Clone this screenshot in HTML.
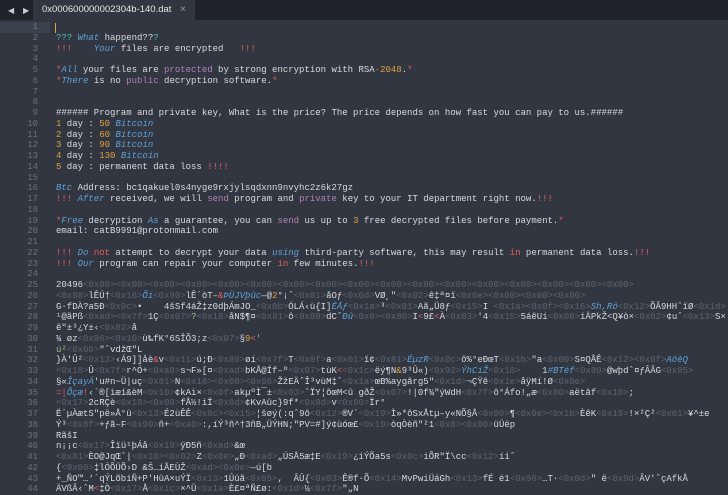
<!DOCTYPE html>
<html><head><meta charset="utf-8"><style>
body{margin:0;width:728px;height:490px;overflow:hidden;background:#313640;font-family:"Liberation Mono",monospace;}
#tabs{position:absolute;left:0;top:0;width:728px;height:20px;background:#1f2228;}
#tab{position:absolute;left:33px;top:0;width:162px;height:20px;background:#313640;color:#e6e6e6;font:9.5px "Liberation Sans",sans-serif;line-height:20px;padding-left:9px;box-sizing:border-box}
#tab span{position:absolute;left:147px;color:#999;font-size:10px}
#arr{position:absolute;left:8px;top:6px;color:#ccc;font-size:8px;letter-spacing:2px}
#gut{position:absolute;left:0;top:22px;width:38px;text-align:right;color:#6b717d;font-size:9px;line-height:10.75px}
#hl{position:absolute;left:0;top:22px;width:50px;height:10.75px;background:#3c424d}
#ed{position:absolute;left:56px;top:22px;color:#d8dbe0;font-size:9px;line-height:10.75px;white-space:pre}
#cur{position:absolute;left:55px;top:23px;width:1px;height:10px;background:#e5a444}
.g{color:#5d6470}.b{color:#5fa0d8;font-style:italic}.o{color:#e0a040}.r{color:#e0605a}.p{color:#b381b8}.gr{color:#98c379}.c{color:#4fb8c0}
</style></head><body>
<div id="tabs"><div id="arr">◀ ▶</div><div id="tab">0x000600000002304b-140.dat<span>×</span></div></div>
<div id="hl"></div>
<div id="gut">1<br>2<br>3<br>4<br>5<br>6<br>7<br>8<br>9<br>10<br>11<br>12<br>13<br>14<br>15<br>16<br>17<br>18<br>19<br>20<br>21<br>22<br>23<br>24<br>25<br>26<br>27<br>28<br>29<br>30<br>31<br>32<br>33<br>34<br>35<br>36<br>37<br>38<br>39<br>40<br>41<br>42<br>43<br>44</div>
<div id="cur"></div>
<div id="ed">
<span class="c">???</span> <span class="b">What</span> happend??<span class="c">?</span>
<span class="r">!!!</span>    <span class="b">Your</span> files are encrypted   <span class="r">!!!</span>

<span class="r">*</span><span class="b">All</span> your files are <span class="p">protected</span> by strong encryption with RSA<span class="r">-</span><span class="o">2048</span>.<span class="r">*</span>
<span class="r">*</span><span class="b">There</span> is no <span class="p">public</span> decryption software.<span class="r">*</span>


###### Program and private key, What is the price? The price depends on how fast you can pay to us.######
<span class="o">1</span> day : <span class="o">50</span> <span class="b">Bitcoin</span>
<span class="o">2</span> day : <span class="o">60</span> <span class="b">Bitcoin</span>
<span class="o">3</span> day : <span class="o">90</span> <span class="b">Bitcoin</span>
<span class="o">4</span> day : <span class="o">130</span> <span class="b">Bitcoin</span>
<span class="o">5</span> day : permanent data loss <span class="r">!!!!</span>

<span class="b">Btc</span> Address: bc1qakuel0s4nyge9rxjylsqdxnn9nvyhc2z6k27gz
<span class="r">!!!</span> <span class="b">After</span> received, we will <span class="p">send</span> program and <span class="p">private</span> key to your IT department right now.<span class="r">!!!</span>

<span class="r">*</span><span class="b">Free</span> decryption <span class="b">As</span> a guarantee, you can <span class="p">send</span> us up to <span class="o">3</span> free decrypted files before payment.<span class="r">*</span>
email: catB9991@protonmail.com

<span class="r">!!!</span> <span class="b">Do</span> <span class="r">not</span> attempt to decrypt your data <span class="b">using</span> third-party software, this may result <span class="r">in</span> permanent data loss.<span class="r">!!!</span>
<span class="r">!!!</span> <span class="b">Our</span> program can repair your computer <span class="r">in</span> few minutes.<span class="r">!!!</span>

20496<span class="g">&lt;0x00&gt;&lt;0x00&gt;&lt;0x00&gt;&lt;0x00&gt;&lt;0x00&gt;&lt;0x00&gt;&lt;0x00&gt;&lt;0x00&gt;&lt;0x00&gt;&lt;0x00&gt;&lt;0x00&gt;&lt;0x00&gt;&lt;0x00&gt;&lt;0x00&gt;&lt;0x00&gt;&lt;0x00&gt;&lt;0x00&gt;</span>
<span class="g">&lt;0x98&gt;</span>lÊÚ†<span class="g">&lt;0x16&gt;</span><span class="b">Õí</span><span class="g">&lt;0x90&gt;</span>lÊ´òT–<span class="r">&amp;</span><span class="b">ÞÜJVþûc</span>—@<span class="o">2</span>°¡ˆ<span class="g">&lt;0x01&gt;</span>åOƒ<span class="g">&lt;0x0d&gt;</span>VØ¸"<span class="g">&lt;0x02&gt;</span>ê‡ª¤ï<span class="g">&lt;0x0e&gt;&lt;0x00&gt;&lt;0x00&gt;&lt;0x00&gt;</span>
G·fDÀ?a5Ð<span class="g">&lt;0x0c&gt;</span>•    4šSf4áŽ‡z0dþÁmJO_<span class="g">&lt;0x0b&gt;</span>ÓLÁ‹ù{I]<span class="b">ÉÅƒ</span><span class="g">&lt;0x1a&gt;</span>³<span class="g">&lt;0x01&gt;</span>Aã„Ü8ƒ<span class="g">&lt;0x15&gt;</span>I <span class="g">&lt;0x1a&gt;&lt;0x0f&gt;&lt;0x16&gt;</span><span class="b">Sh,Rö</span><span class="g">&lt;0x12&gt;</span>ÕÂ9HHˆïØ<span class="g">&lt;0x1d&gt;</span>
¹@ãPß<span class="g">&lt;0xad&gt;&lt;0x7f&gt;</span>1Ç<span class="g">&lt;0x07&gt;</span><span class="gr">?</span><span class="g">&lt;0x18&gt;</span>åN$¶¤<span class="g">&lt;0x81&gt;</span>ô<span class="g">&lt;0x80&gt;</span>dCˆ<span class="b">Ðû</span><span class="g">&lt;0x0&gt;&lt;0x80&gt;</span>I<span class="r">&lt;</span>9£<span class="r">&lt;</span>À<span class="g">&lt;0x03&gt;</span>'4<span class="g">&lt;0x15&gt;</span>5áêUí<span class="g">&lt;0x00&gt;</span>iÄPkŽ&lt;Q¥ò×<span class="g">&lt;0x02&gt;</span>¢uˆ<span class="g">&lt;0x13&gt;</span>S×
ê"±³¿Y±‹<span class="g">&lt;0x02&gt;</span>å
¾ øz<span class="g">&lt;0x06&gt;&lt;0x10&gt;</span>ù‰fK°6SÎÕ3;z<span class="g">&lt;0x07&gt;</span>§<span class="o">9</span><span class="r">&lt;</span><span class="gr">'</span>
<span class="gr">ú²</span><span class="g">&lt;0x00&gt;</span>"ˆvdžŒ"L
}À'Û²<span class="g">&lt;0x13&gt;</span>‹Á9]]åè<span class="r">&amp;</span>v<span class="g">&lt;0x11&gt;</span>ú;Ð<span class="g">&lt;0x80&gt;</span>øí<span class="g">&lt;0x7f&gt;</span>T<span class="g">&lt;0x0f&gt;</span>a<span class="g">&lt;0x01&gt;</span>ï¢<span class="g">&lt;0x81&gt;</span><span class="b">ÉµzR</span><span class="g">&lt;0x0c&gt;</span>ô%°eÐœT<span class="g">&lt;0x1b&gt;</span>"a<span class="g">&lt;0x00&gt;</span>S¤QÅÊ<span class="g">&lt;0x12&gt;&lt;0x0f&gt;</span><span class="b">AöèQ</span>
<span class="g">&lt;0x18&gt;</span>Û<span class="g">&lt;0x7f&gt;</span>r^Ó+<span class="g">&lt;0xa0&gt;</span>s¬F»[¤<span class="g">&lt;0xad&gt;</span>bKÅ@Íf–º<span class="g">&lt;0x07&gt;</span>tùK<span class="r">&lt;</span><span class="g">&lt;0x1c&gt;</span>ëý¶N<span class="o">&amp;</span>9³Û«)<span class="g">&lt;0x92&gt;</span><span class="b">ÝhCíŽ</span><span class="g">&lt;0x10&gt;</span>    1<span class="b">#BTéf</span><span class="g">&lt;0x80&gt;</span>@wþdˆ¤ƒÂÂG<span class="g">&lt;0x05&gt;</span>
§«<span class="b">ÎçayÁ</span>'u#n~Ü|uç<span class="g">&lt;0x81&gt;</span>N<span class="g">&lt;0x16&gt;&lt;0x08&gt;&lt;0x06&gt;</span>ŽžEÄˆÎ³vùM‡ˆ<span class="g">&lt;0x1a&gt;</span>œB%aygârg5"<span class="g">&lt;0x1d&gt;</span>¬ÇŸê<span class="g">&lt;0x1e&gt;</span>åÿMí!Ø<span class="g">&lt;0x0e&gt;</span>
<span class="r">=|</span><span class="b">Õçæ</span><span class="r">!</span>‹`®[ìæi&amp;èM<span class="g">&lt;0x10&gt;</span>¢kAì×<span class="g">&lt;0x0f&gt;</span>akµºÌ¯±<span class="g">&lt;0x03&gt;</span>ˆÏY¦õœM<û gðŽ<span class="g">&lt;0x07&gt;</span>!|0f¾"ýWdH<span class="g">&lt;0x7f&gt;</span>ô°Áfo!„æ<span class="g">&lt;0x80&gt;</span>aëtâf<span class="g">&lt;0x10&gt;</span>;
<span class="g">&lt;0x17&gt;</span>2cRÇè<span class="g">&lt;0x18&gt;&lt;0x08&gt;</span>fÅ½!iÏ<span class="g">&lt;0x8d&gt;</span>¢KvAûc}9f*<span class="g">&lt;0x8d&gt;</span>v<span class="g">&lt;0x80&gt;</span>Ïr°
Ë´µÀætS"pë»Å°ü<span class="g">&lt;0x13&gt;</span>É2ùÊÊ<span class="g">&lt;0x0c&gt;&lt;0x15&gt;</span>¦šøý(:qˆ9ô<span class="g">&lt;0x12&gt;</span>®V´<span class="g">&lt;0x19&gt;</span>Ì»*ôSxÅtµ–y«NÕ§Å<span class="g">&lt;0x00&gt;</span>¶<span class="g">&lt;0x0e&gt;&lt;0x1b&gt;</span>ÈêK<span class="g">&lt;0x19&gt;</span>!×²Ç²<span class="g">&lt;0x01&gt;</span>¥^±e
Ý³<span class="g">&lt;0x8f&gt;</span>+ƒã–F<span class="g">&lt;0x90&gt;</span>ñ+<span class="g">&lt;0xa0&gt;</span>:,íÝ³ñ^†3ñB„ÜÝHN;"PV=#]ý¢ùóœ£<span class="g">&lt;0x19&gt;</span>òqÒèñ"²1<span class="g">&lt;0x8&gt;&lt;0x00&gt;</span>üÜëp
RãšI
n¡¡c<span class="g">&lt;0x17&gt;</span>Îïü¹þÁå<span class="g">&lt;0x19&gt;</span>ÿÐ5ñ<span class="g">&lt;0xad&gt;</span>&amp;œ
<span class="g">&lt;0x81&gt;</span>ÈO@JqŒˆ|<span class="g">&lt;0x10&gt;&lt;0x02&gt;</span>Z<span class="g">&lt;0x0e&gt;</span>„Ð<span class="g">&lt;0xad&gt;</span>„ÚSÅ5æ‡E<span class="g">&lt;0x19&gt;</span>¿iÝÕa5s<span class="g">&lt;0x0c&gt;</span>iÕR"Ï\cc<span class="g">&lt;0x12&gt;</span>íiˆ
{<span class="g">&lt;0x00&gt;</span>‡lÓÕÜÕ›D &amp;Š…íÃEÙŽ<span class="g">&lt;0xad&gt;&lt;0x0e&gt;</span>—ú[b
+_ÑO™…‘´qÝLõbiÑ+P'HûA×uÝÏ<span class="g">&lt;0x13&gt;</span>1Ûûã<span class="g">&lt;0x05&gt;</span>,  ÂÛ{<span class="g">&lt;0x03&gt;</span>Ê®f·Õ<span class="g">&lt;0x14&gt;</span>MvPwíÜáGh<span class="g">&lt;0x13&gt;</span>fÉ é1<span class="g">&lt;0x06&gt;</span>…T·<span class="g">&lt;0x0d&gt;</span>" ë<span class="g">&lt;0x9d&gt;</span>ÂV'ˆçAfkÅ
ÄVßÂ‹ˆM<span class="r">&lt;</span>‡Ò<span class="g">&lt;0x17&gt;</span>Å<span class="g">&lt;0x1c&gt;</span>×^Ü<span class="g">&lt;0x1a&gt;</span>È£¤ªÑ£ø:<span class="g">&lt;0x1d&gt;</span>¼<span class="g">&lt;0x7f&gt;</span>"„N
</div>
</body></html>
